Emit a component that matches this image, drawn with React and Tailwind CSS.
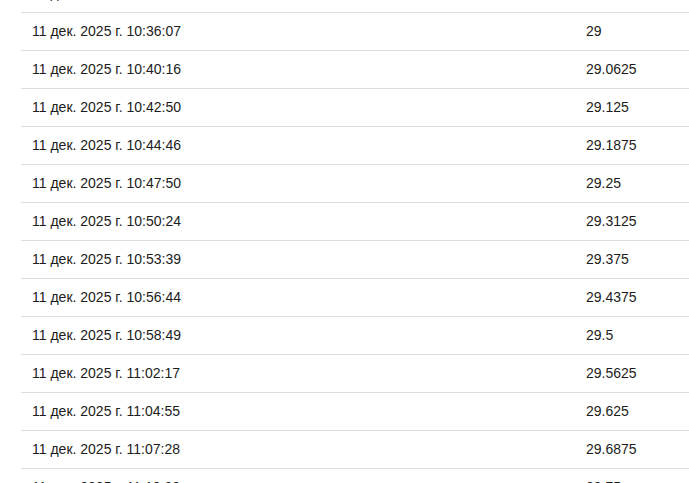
const rows = [
  ['11 дек. 2025 г. 10:33:41', '28.9375'],
  ['11 дек. 2025 г. 10:36:07', '29'],
  ['11 дек. 2025 г. 10:40:16', '29.0625'],
  ['11 дек. 2025 г. 10:42:50', '29.125'],
  ['11 дек. 2025 г. 10:44:46', '29.1875'],
  ['11 дек. 2025 г. 10:47:50', '29.25'],
  ['11 дек. 2025 г. 10:50:24', '29.3125'],
  ['11 дек. 2025 г. 10:53:39', '29.375'],
  ['11 дек. 2025 г. 10:56:44', '29.4375'],
  ['11 дек. 2025 г. 10:58:49', '29.5'],
  ['11 дек. 2025 г. 11:02:17', '29.5625'],
  ['11 дек. 2025 г. 11:04:55', '29.625'],
  ['11 дек. 2025 г. 11:07:28', '29.6875'],
  ['11 дек. 2025 г. 11:10:33', '29.75'],
];

export default function App() {
  return (
    <div className="h-screen overflow-hidden bg-white font-['Liberation_Sans',Arial,sans-serif] text-[14px] text-[#1c1c1c]">
      <div className="-mt-[26px] ml-[21px]">
        {rows.map(([time, value], i) => (
          <div
            key={i}
            className="grid grid-cols-[554px_1fr] h-[38px] items-center border-t border-[#dedede]"
          >
            <div className="pl-[11px]">{time}</div>
            <div className="pl-[11px]">{value}</div>
          </div>
        ))}
      </div>
    </div>
  );
}
